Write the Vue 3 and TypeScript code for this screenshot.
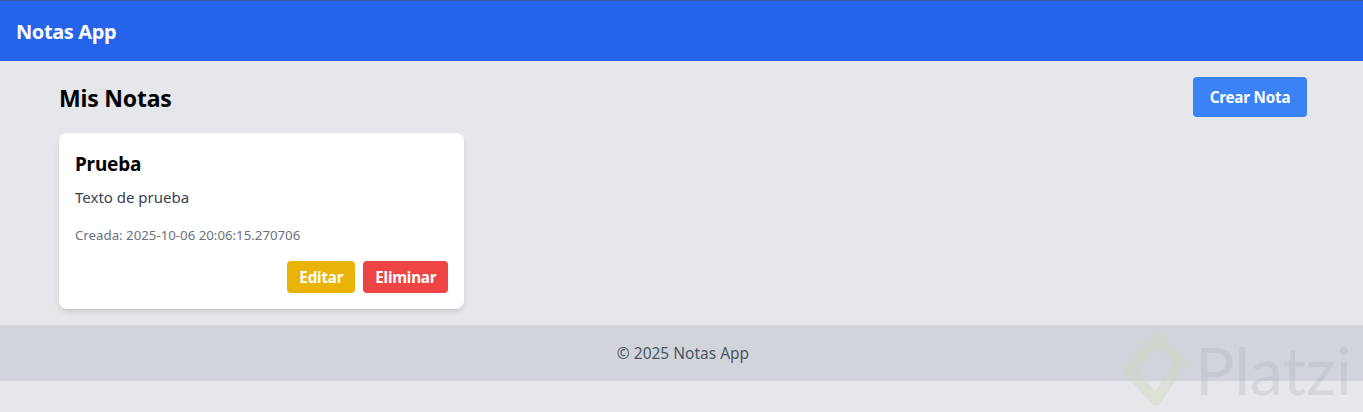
<script setup lang="ts">
interface Note {
  id: number
  title: string
  body: string
  created: string
}

const notes: Note[] = [
  { id: 1, title: 'Prueba', body: 'Texto de prueba', created: '2025-10-06 20:06:15.270706' },
]
</script>

<template>
  <div class="page">
    <header class="topbar">
      <span class="brand">Notas App</span>
    </header>
    <main class="content">
      <div class="heading">
        <h1>Mis Notas</h1>
        <button class="btn btn-create" type="button">Crear Nota</button>
      </div>
      <div class="grid">
        <article v-for="note in notes" :key="note.id" class="card">
          <h2>{{ note.title }}</h2>
          <p class="body">{{ note.body }}</p>
          <p class="date">Creada: {{ note.created }}</p>
          <div class="actions">
            <button class="btn btn-small btn-edit" type="button">Editar</button>
            <button class="btn btn-small btn-delete" type="button">Eliminar</button>
          </div>
        </article>
      </div>
    </main>
    <footer class="foot">© 2025 Notas App</footer>
    <div class="watermark" aria-hidden="true">
      <svg width="66" height="78" viewBox="0 0 66 78">
        <path d="M36 7 L59 31 L34 69 L7 40 Z" fill="none" stroke="#c9d8b4" stroke-width="11" stroke-linejoin="round" />
      </svg>
      <span class="mark-text">Platzi</span>
    </div>
  </div>
</template>

<style>
html,
body {
  margin: 0;
  background: #e5e7eb;
}
</style>

<style scoped>
.page {
  position: relative;
  height: 412px;
  overflow: hidden;
  background: #e5e7eb;
  font-family: "Noto Sans", "Open Sans", sans-serif;
  color: #000;
}
.topbar {
  box-sizing: border-box;
  height: 61px;
  display: flex;
  align-items: center;
  padding: 0 16px;
  background: #2563eb;
  border-top: 1px solid #3a5aa8;
}
.brand {
  color: #fff;
  font-size: 20px;
  font-weight: 700;
  letter-spacing: -0.4px;
}
.content {
  padding: 16px 56px 16px 59px;
}
.heading {
  display: flex;
  justify-content: space-between;
  align-items: center;
  margin-bottom: 16px;
}
h1 {
  margin: 0;
  padding-top: 2px;
  font-size: 23px;
  line-height: 30px;
  font-weight: 700;
  letter-spacing: -0.2px;
}
.grid {
  display: grid;
  grid-template-columns: repeat(3, 1fr);
  gap: 16px;
}
.card {
  box-sizing: border-box;
  height: 176px;
  padding: 16px;
  background: #fff;
  border-radius: 8px;
  box-shadow: 0 4px 6px -1px rgba(0, 0, 0, 0.1), 0 2px 4px -2px rgba(0, 0, 0, 0.1);
}
h2 {
  margin: 0 0 6px;
  font-size: 19px;
  line-height: 30px;
  font-weight: 700;
  letter-spacing: -0.2px;
}
.body {
  margin: 0 0 16px;
  font-size: 15px;
  line-height: 24px;
  color: #374151;
}
.date {
  margin: 0 0 16px;
  font-size: 13.25px;
  line-height: 20px;
  color: #6b7280;
}
.actions {
  display: flex;
  justify-content: flex-end;
  gap: 8px;
}
.btn {
  border: 0;
  color: #fff;
  font-family: inherit;
  font-weight: 700;
  letter-spacing: -0.2px;
  padding: 0;
}
.btn-create {
  width: 114px;
  height: 40px;
  font-size: 15.2px;
  background: #3b82f6;
  border-radius: 4px;
}
.btn-small {
  height: 32px;
  font-size: 15.2px;
  border-radius: 4px;
}
.btn-edit {
  width: 68px;
  background: #eab308;
}
.btn-delete {
  width: 85px;
  background: #ef4444;
}
.foot {
  height: 56px;
  display: flex;
  align-items: center;
  justify-content: center;
  padding-left: 3px;
  background: #d1d5db;
  font-size: 15.5px;
  color: #4b5563;
}
.watermark {
  position: absolute;
  left: 1122px;
  top: 331px;
  display: flex;
  align-items: center;
  gap: 7px;
  pointer-events: none;
}
.watermark svg {
  opacity: 0.35;
}
.mark-text {
  font-family: "Lato", sans-serif;
  font-size: 66px;
  line-height: 78px;
  color: #9ca3af;
  opacity: 0.22;
}
</style>
